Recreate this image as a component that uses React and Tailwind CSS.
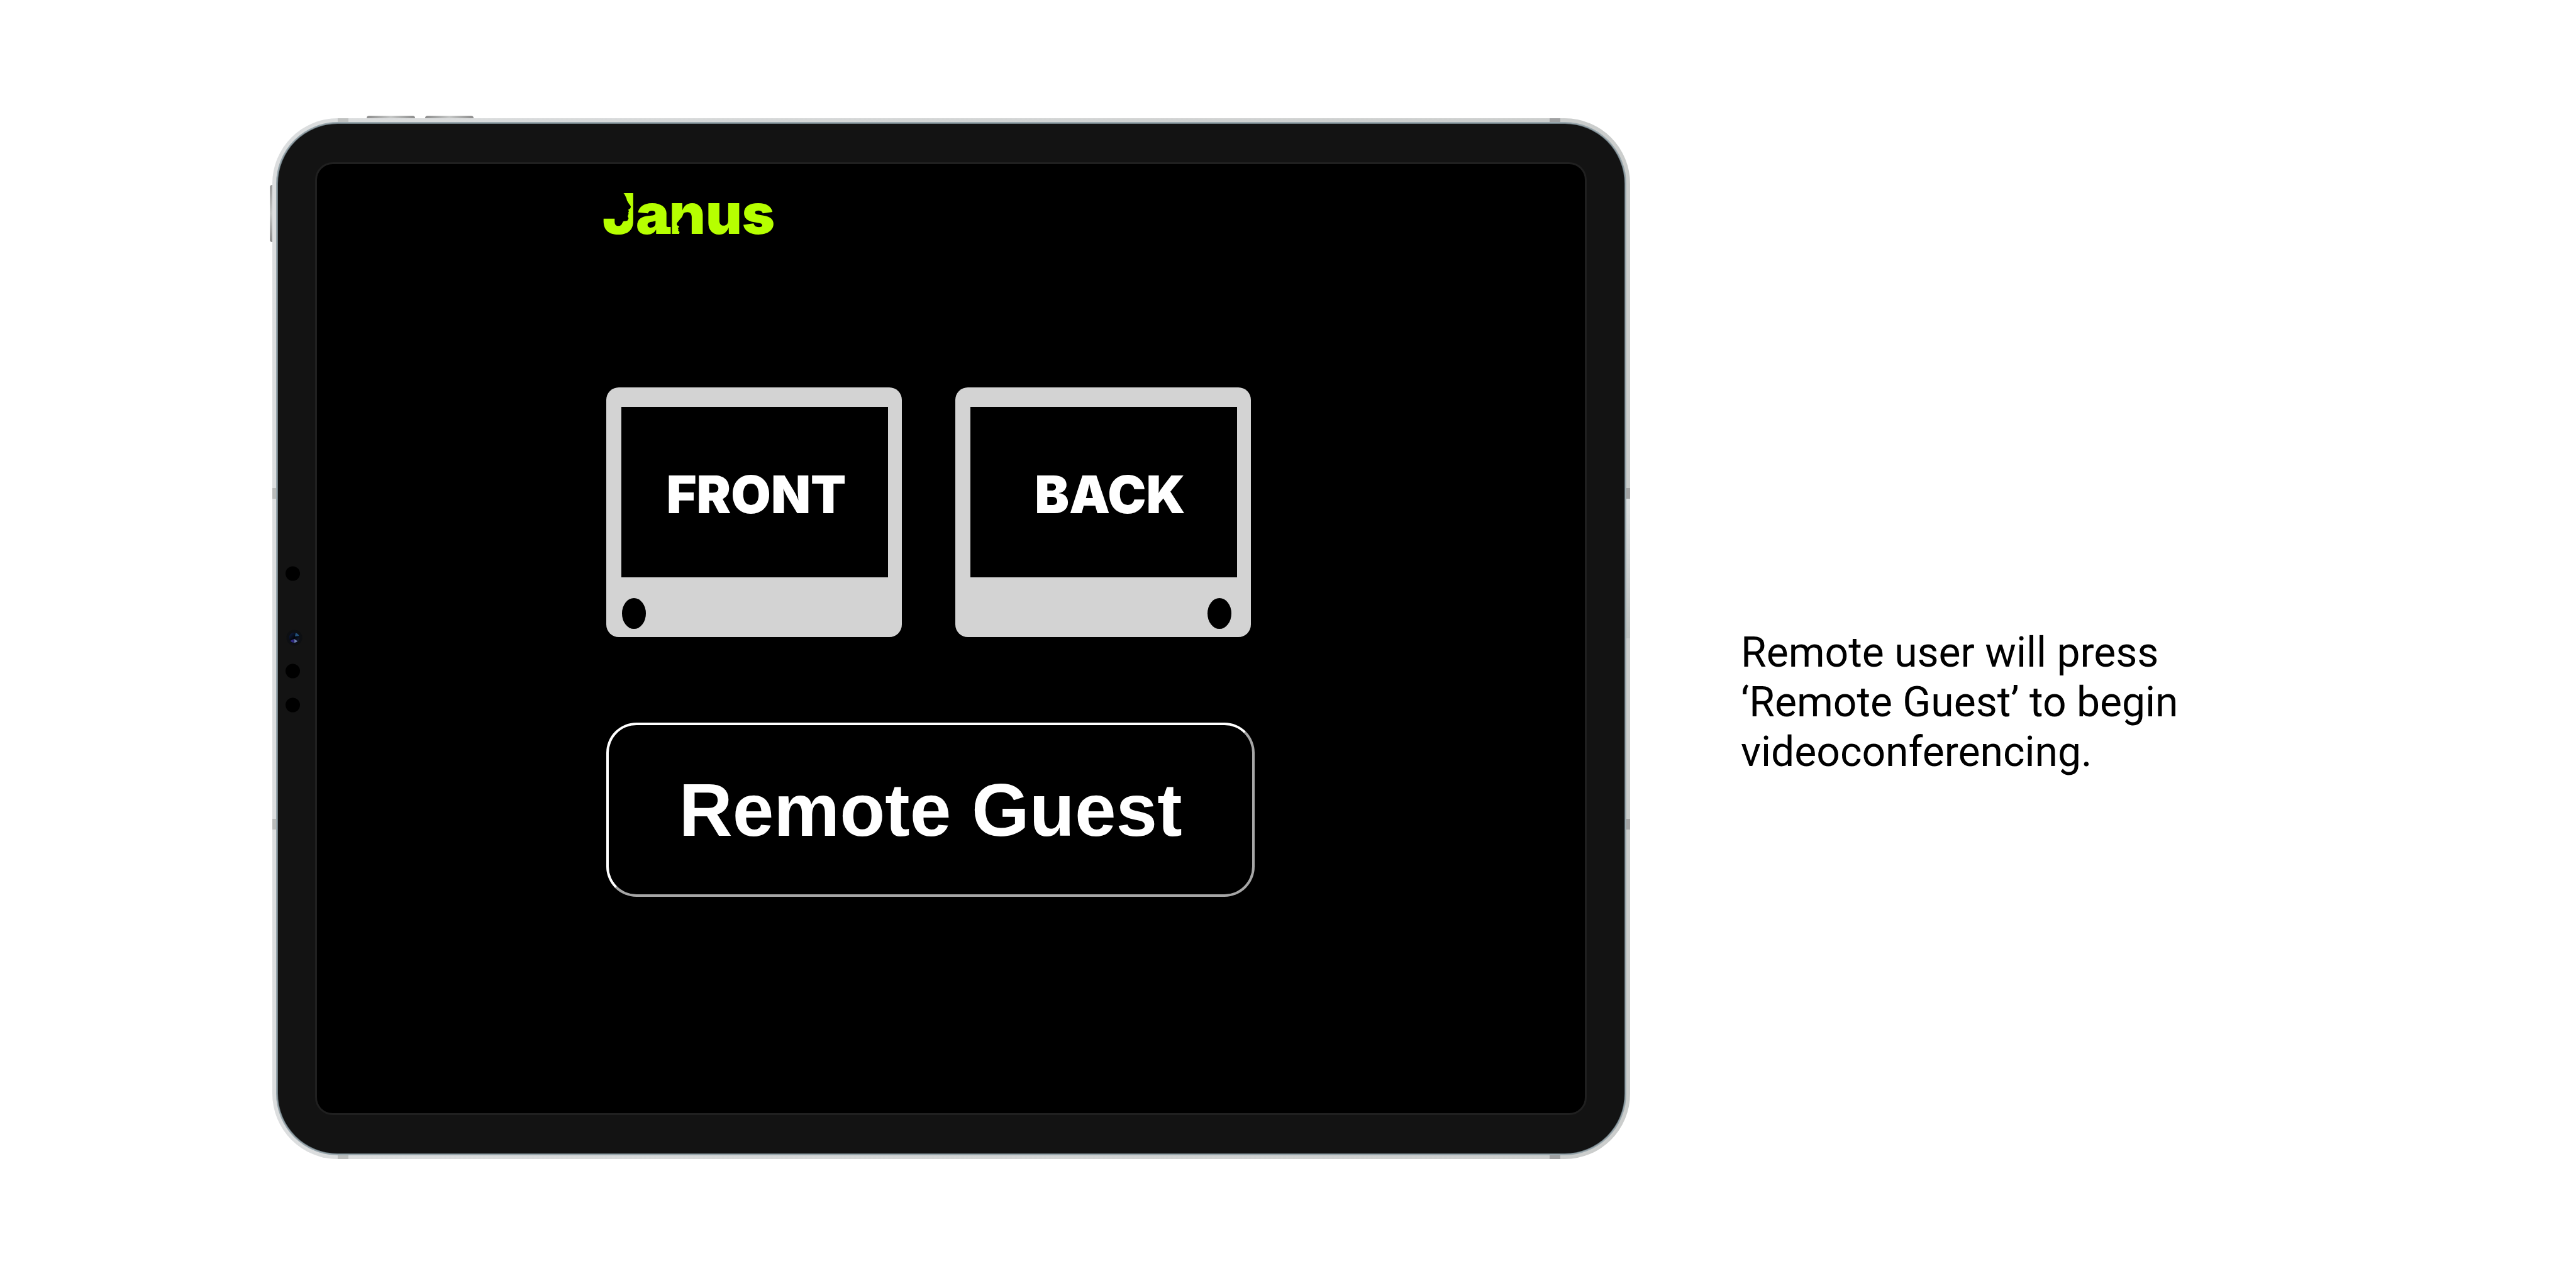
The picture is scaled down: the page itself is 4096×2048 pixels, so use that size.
function Logo() {
  return (
    <div className="relative w-max">
      <h1 className="font-['Inter',sans-serif] text-[89px] leading-[89px] font-black text-[#b6ff00]">
        Janus
      </h1>
      {/* Face profiles carved into the J and the n, and the foot of the a */}
      <svg viewBox="0 0 280 89" className="absolute inset-0 h-[89px] w-[280px]" aria-hidden="true">
        <path
          d="M29 9 L32 11 L34.5 13 L36.5 17 L38 20 L39 24 L42 29 L45 33 L44.5 36 L41 38.5 L42 41 L41 43 L41.5 45 L40 49 L41.5 52 L40 55.5 L37 56.5 L34.5 56.5 L32.5 57.5 L31.5 60 L29 60 Z"
          fill="#000"
        />
        <path
          d="M132 42 L129 44 L126.500 50 L123 54 L120.500 57 L118.500 59.500 L118 62 L119 63.500 L121.800 64.500 L121.500 66.500 L119.500 67.500 L121 69.500 L120 71 L122.500 74 L121.500 79 L130 79 L130 44 Z"
          fill="#000"
        />
        <path d="M101 64 Q102 66 104 66 L108.500 66 L108.500 77 L94 77 L94 70 L101 60 Z" fill="#b6ff00" />
      </svg>
    </div>
  );
}

function Device({ label, lens, screen }) {
  return (
    <button
      type="button"
      className="relative flex flex-col rounded-[20px] bg-[#d3d3d3] pt-[31px] pr-[22px] pb-[95px] pl-[24px]"
    >
      <span
        className={`flex h-[271px] w-full items-center justify-center bg-black pt-[8px] font-['Inter',sans-serif] text-[82px] leading-[82px] font-black text-white ${screen}`}
      >
        {label}
      </span>
      <span className={`absolute bottom-[13px] h-[49px] w-[38px] rounded-[50%] bg-black ${lens}`} />
    </button>
  );
}

function Sensors() {
  return (
    <svg viewBox="0 0 36 236" className="ml-[8px] h-[236px] w-[36px]" aria-hidden="true">
      <defs>
        <linearGradient id="lens" x1="0" y1="0" x2="1" y2="1">
          <stop offset="0" stopColor="#10204c" />
          <stop offset="0.5" stopColor="#03050b" />
          <stop offset="1" stopColor="#1a2440" />
        </linearGradient>
      </defs>
      <circle cx="15.5" cy="14" r="11.5" fill="#000" />
      <circle cx="18" cy="116" r="12.5" fill="#0d0f12" />
      <circle cx="18" cy="116" r="8.3" fill="url(#lens)" />
      <path d="M19 114 L20 108.500 A8 8 0 0 1 25.500 113 Z" fill="#23507a" />
      <path d="M17 118 L11.500 121 A8 8 0 0 0 17 124 Z" fill="#2f2885" />
      <path d="M18 118 L18 124 A8 8 0 0 0 23 121.500 Z" fill="#6f7fb4" />
      <circle cx="15.5" cy="169" r="11.5" fill="#000" />
      <circle cx="15.5" cy="223" r="11.5" fill="#000" />
    </svg>
  );
}

/* Side keys and antenna bands that lie over the metal rim */
function RimDetails() {
  return (
    <>
      <div className="absolute inset-x-0 -top-[4px] flex gap-[16px] pl-[150px]">
        <i className="h-[4px] w-[77px] rounded-t-[4px] bg-linear-to-r from-[#8c8c8c] via-[#c6c8c7] to-[#8c8c8c]" />
        <i className="h-[4px] w-[77px] rounded-t-[4px] bg-linear-to-r from-[#8c8c8c] via-[#c6c8c7] to-[#8c8c8c]" />
      </div>
      <div className="absolute inset-y-0 -left-[4px] pt-[106px]">
        <i className="block h-[91px] w-[4px] rounded-l-[4px] bg-linear-to-b from-[#9a9a9a] via-[#c6c8c7] to-[#8c8c8c]" />
      </div>
      <div className="absolute inset-x-0 top-0 flex justify-between pr-[111px] pl-[104px]">
        <i className="h-[6px] w-[17px] bg-[#c0c2c1]" />
        <i className="h-[6px] w-[17px] bg-[#a0a1a2]" />
      </div>
      <div className="absolute inset-x-0 bottom-0 flex justify-between pr-[111px] pl-[104px]">
        <i className="h-[6px] w-[17px] bg-[#bcbebd]" />
        <i className="h-[6px] w-[17px] bg-[#a0a1a2]" />
      </div>
      <div className="absolute inset-y-0 left-0 flex flex-col gap-[509px] pt-[588px]">
        <i className="h-[17px] w-[6px] bg-[#b9bbba]" />
        <i className="h-[17px] w-[6px] bg-[#b9bbba]" />
      </div>
      <div className="absolute inset-y-0 right-0 flex flex-col pt-[588px]">
        <i className="h-[17px] w-[6px] bg-[#a4a4a4]" />
        <i className="mb-[287px] h-[222px] w-[6px] bg-linear-to-b from-[#dcdfe0] to-[#bfc2c1]" />
        <i className="h-[17px] w-[6px] bg-[#a4a4a4]" />
      </div>
    </>
  );
}

export default function App() {
  return (
    <main className="flex min-h-screen items-start bg-white pt-[188px] pb-[200px] pl-[433px]">
      <section className="relative flex-1 rounded-[104px] bg-linear-to-r from-[#dcdedf] to-[#cbcdcc] p-[6px]">
        <RimDetails />
        <div className="rounded-[98px] border-2 border-[#98a6ac] bg-[#6d7a80] p-px">
          <div className="flex items-center rounded-[95px] bg-[#131313] py-[61px] pr-[60px]">
            <div className="w-[59px] shrink-0">
              <Sensors />
            </div>
            <div className="flex-1 rounded-[28px] border-3 border-[#202020] bg-black pb-[344px]">
              <header className="h-[355px] pt-[34px] pl-[454px]">
                <Logo />
              </header>
              <div className="ml-[460px] flex w-[1031px] flex-col gap-[136px]">
                <div className="grid grid-cols-[470px_470px] gap-[85px]">
                  <Device label="FRONT" lens="left-[25px]" screen="pl-[5px]" />
                  <Device label="BACK" lens="right-[31px]" screen="pl-[20px]" />
                </div>
                <button
                  type="button"
                  className="h-[277px] rounded-[48px] border-4 border-t-white border-r-[#a6a6a6] border-b-[#a6a6a6] border-l-white bg-black font-['Liberation_Sans',Arial,sans-serif] text-[118px] leading-[118px] font-bold text-white"
                >
                  Remote Guest
                </button>
              </div>
            </div>
          </div>
        </div>
      </section>
      <aside className="w-[1504px] pt-[810px] pl-[176px]">
        <p className="w-[760px] font-['Roboto',sans-serif] text-[66px] leading-[79px] text-black">
          Remote user will press ‘Remote Guest’ to begin videoconferencing.
        </p>
      </aside>
    </main>
  );
}
